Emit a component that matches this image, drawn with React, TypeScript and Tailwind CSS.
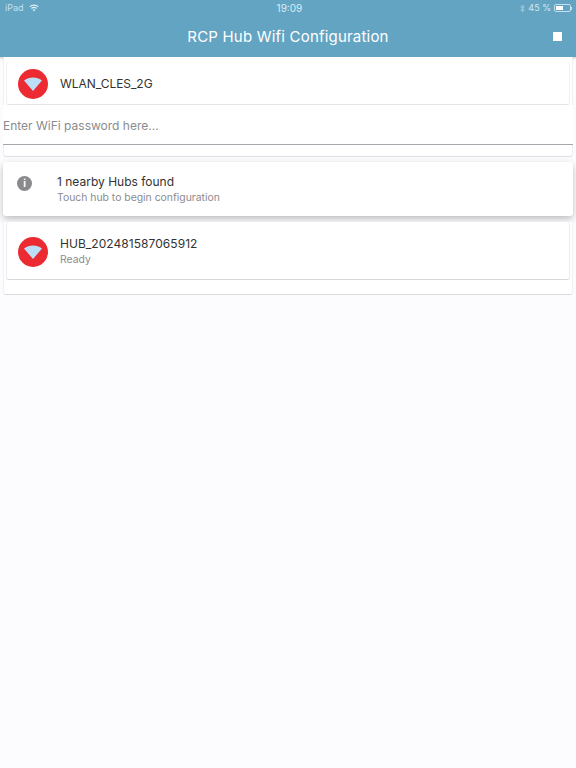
const font = { fontFamily: "Inter, sans-serif" };

function WifiBadge() {
  return (
    <div className="flex h-[30px] w-[30px] shrink-0 items-center justify-center rounded-full bg-[#ec2a32]">
      <svg width="20" height="16" viewBox="0 0 20 16">
        <path d="M1 4.6 C6 0.4 14 0.4 19 4.6 L10 15 Z" fill="#bcdff7" />
      </svg>
    </div>
  );
}

function StatusBar() {
  return (
    <div className="flex h-4 items-center justify-between pl-[5px] pr-[4px] text-[9px] text-[#c4e0ee]">
      <div className="flex items-center gap-[5px]">
        <span>iPad</span>
        <svg width="10" height="8" viewBox="0 0 10 8" fill="none" stroke="#e6f3f9">
          <path d="M0.8 2.8 C3 0.6 7 0.6 9.2 2.8" strokeWidth="1.1" />
          <path d="M2.5 4.5 C3.9 3.2 6.1 3.2 7.5 4.5" strokeWidth="1.1" />
          <path d="M3.9 5.9 L5 7.2 L6.1 5.9 C5.5 5.3 4.5 5.3 3.9 5.9 Z" fill="#e6f3f9" strokeWidth="0.3" />
        </svg>
      </div>
      <span className="pl-[20px] text-[10px] text-[#dcedf5]">19:09</span>
      <div className="flex items-center gap-[3px]">
        <svg width="5" height="9" viewBox="0 0 5 9" fill="none" stroke="#a9d0e3" strokeWidth="0.8">
          <path d="M0.3 2.3 L4.2 6.2 L2.4 8 V1 L4.2 2.8 L0.3 6.7" />
        </svg>
        <span className="text-[#d3e8f2]">45 %</span>
        <div className="flex items-center">
          <div className="flex h-[8px] w-[17px] rounded-[2px] border border-[#c4e0ee] p-px">
            <div className="w-[7px] bg-white" />
          </div>
          <div className="h-[3px] w-px bg-[#c4e0ee]" />
        </div>
      </div>
    </div>
  );
}

function Header() {
  return (
    <div className="h-[57px] bg-[#63a4c3] shadow-[0_1px_3px_rgba(0,0,0,0.25)]">
      <StatusBar />
      <div className="flex h-[41px] items-center">
        <div className="w-[23px]" />
        <h1 className="flex-1 text-center text-[15px] leading-none tracking-[0.2px] text-white">
          RCP Hub Wifi Configuration
        </h1>
        <div className="flex w-[23px] items-center">
          <div className="h-[9px] w-[9px] bg-white" />
        </div>
      </div>
    </div>
  );
}

export default function App() {
  return (
    <div className="min-h-[768px] bg-[#fcfbfd] text-[#333]" style={font}>
      <Header />

      <div className="mx-[3px] h-[100px] rounded-b-[3px] border-x border-b border-x-[#f0eff2] border-b-[#e0dee3] bg-white pt-[5px]">
        <div className="mx-[2px] flex h-[43px] items-center rounded-[3px] border-x border-b border-x-[#f0eff2] border-b-[#e4e3e6] pl-[11px] pt-[2px]">
          <WifiBadge />
          <span className="ml-[12px] text-[12px] tracking-[-0.05px]">WLAN_CLES_2G</span>
        </div>
        <div className="-mx-px flex h-[40px] items-center border-b border-[#a8a6ac] bg-white pt-[2px] text-[12px] text-[#8b8b8f]">
          Enter WiFi password here...
        </div>
      </div>

      <div className="mx-[3px] mt-[5px] flex h-[54px] items-center rounded-[3px] bg-white pl-[14px] shadow-[0_3px_7px_rgba(0,0,0,0.25)]">
        <div className="mb-[12px] flex h-[15px] w-[15px] shrink-0 items-center justify-center rounded-full bg-[#8a8a8e] text-[10px] font-bold leading-none text-white">
          i
        </div>
        <div className="ml-[25px]">
          <div className="text-[12px] leading-[16px]">1 nearby Hubs found</div>
          <div className="text-[10.4px] leading-[15px] text-[#8b8b8f]">
            Touch hub to begin configuration
          </div>
        </div>
      </div>

      <div className="mx-[3px] mt-[6px] h-[73px] rounded-b-[3px] border-x border-b border-x-[#f0eff2] border-b-[#dcdade] bg-white">
        <div className="mx-[2px] flex h-[58px] items-center rounded-[3px] border-x border-b border-x-[#eceaee] border-b-[#d8d7da] pl-[11px] pt-[2px]">
          <WifiBadge />
          <div className="ml-[12px]">
            <div className="text-[12px] leading-[16px] tracking-[0.05px]">HUB_202481587065912</div>
            <div className="text-[10.4px] leading-[15px] text-[#8b8b8f]">Ready</div>
          </div>
        </div>
      </div>
    </div>
  );
}
